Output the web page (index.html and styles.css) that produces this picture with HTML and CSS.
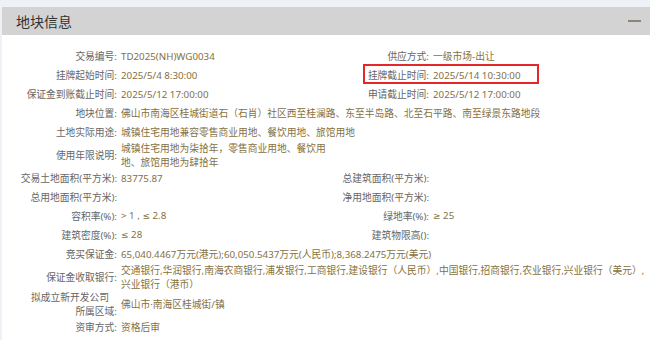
FILE: index.html
```html
<!DOCTYPE html>
<html lang="zh-CN">
<head>
<meta charset="utf-8">
<title>地块信息</title>
<link rel="stylesheet" href="styles.css">
</head>
<body>
<div class="panel">
  <div class="panel-head">
    <h2 class="title">地块信息</h2>
    <span class="collapse" aria-label="收起"></span>
  </div>
  <div class="info">
    <div class="k k1">交易编号:</div><div class="v">TD2025(NH)WG0034</div>
    <div class="k">供应方式:</div><div class="v">一级市场-出让</div>

    <div class="k k1">挂牌起始时间:</div><div class="v">2025/5/4 8:30:00</div>
    <div class="k">挂牌截止时间:</div><div class="v">2025/5/14 10:30:00</div>

    <div class="k k1">保证金到账截止时间:</div><div class="v">2025/5/12 17:00:00</div>
    <div class="k">申请截止时间:</div><div class="v">2025/5/12 17:00:00</div>

    <div class="k k1">地块位置:</div><div class="v wide">佛山市南海区桂城街道石（石肖）社区西至桂澜路、东至半岛路、北至石平路、南至绿景东路地段</div>

    <div class="k k1">土地实际用途:</div><div class="v wide">城镇住宅用地兼容零售商业用地、餐饮用地、旅馆用地</div>

    <div class="k k1">使用年限说明:</div><div class="v">城镇住宅用地为柒拾年，零售商业用地、餐饮用地、旅馆用地为肆拾年</div>

    <div class="k k1">交易土地面积(平方米):</div><div class="v">83775.87</div>
    <div class="k">总建筑面积(平方米):</div><div class="v"></div>

    <div class="k k1">总用地面积(平方米):</div><div class="v"></div>
    <div class="k">净用地面积(平方米):</div><div class="v"></div>

    <div class="k k1">容积率(%):</div><div class="v">&gt; 1 , <span class="sym">≤</span> 2.8</div>
    <div class="k">绿地率(%):</div><div class="v"><span class="sym">≥</span> 25</div>

    <div class="k k1">建筑密度(%):</div><div class="v"><span class="sym">≤</span> 28</div>
    <div class="k">建筑物限高():</div><div class="v"></div>

    <div class="k k1">竞买保证金:</div><div class="v wide">65,040.4467万元(港元);60,050.5437万元(人民币);8,368.2475万元(美元)</div>

    <div class="k k1">保证金收取银行:</div><div class="v wide">交通银行,华润银行,南海农商银行,浦发银行,工商银行,建设银行（人民币）,中国银行,招商银行,农业银行,兴业银行（美元）,兴业银行（港币）</div>

    <div class="k k1"><span class="l1">拟成立新开发公司</span><br>所属区域:</div><div class="v">佛山市·南海区桂城街/镇</div>

    <div class="k k1">资审方式:</div><div class="v">资格后审</div>
  </div>
</div>
<div class="highlight"></div>
</body>
</html>
```

FILE: styles.css
```css
html, body {
  margin: 0;
  padding: 0;
}
body {
  background: #eef1f5;
  font-family: "Noto Sans", "Noto Sans CJK SC", sans-serif;
  width: 650px;
  height: 340px;
  overflow: hidden;
}
.panel {
  margin: 7px 0 0 2px;
  background: #ffffff;
  height: 333px;
}
.panel-head {
  height: 28px;
  background: #d3d3d3;
  display: flex;
  align-items: center;
  justify-content: space-between;
  padding: 0 9px 0 14px;
}
.title {
  margin: 0;
  font-size: 14px;
  font-weight: 400;
  color: #333333;
  font-family: "Noto Sans CJK SC", sans-serif;
  line-height: 1;
}
.collapse {
  width: 13px;
  height: 2px;
  background: #8c8575;
  margin-top: -1px;
}
.info {
  margin-top: 12px;
  display: grid;
  grid-template-columns: 118px 211px 101px 1fr;
  grid-auto-rows: minmax(19px, auto);
  align-items: center;
  font-size: 9.75px;
  line-height: 13.5px;
}
.k {
  color: #666666;
  text-align: right;
  padding-right: 3px;
  white-space: nowrap;
}
.k1 {
  grid-column-start: 1;
}
.v {
  color: #85713f;
  padding-left: 1px;
}
.sym {
  font-family: "DejaVu Sans", sans-serif;
  font-size: 9px;
}
.wide {
  grid-column: span 3;
}
.l1 {
  display: inline-block;
  margin-right: 8px;
}
.highlight {
  position: absolute;
  left: 363px;
  top: 64px;
  width: 176px;
  height: 20px;
  border: 2px solid #e5262b;
  box-sizing: border-box;
}
```
